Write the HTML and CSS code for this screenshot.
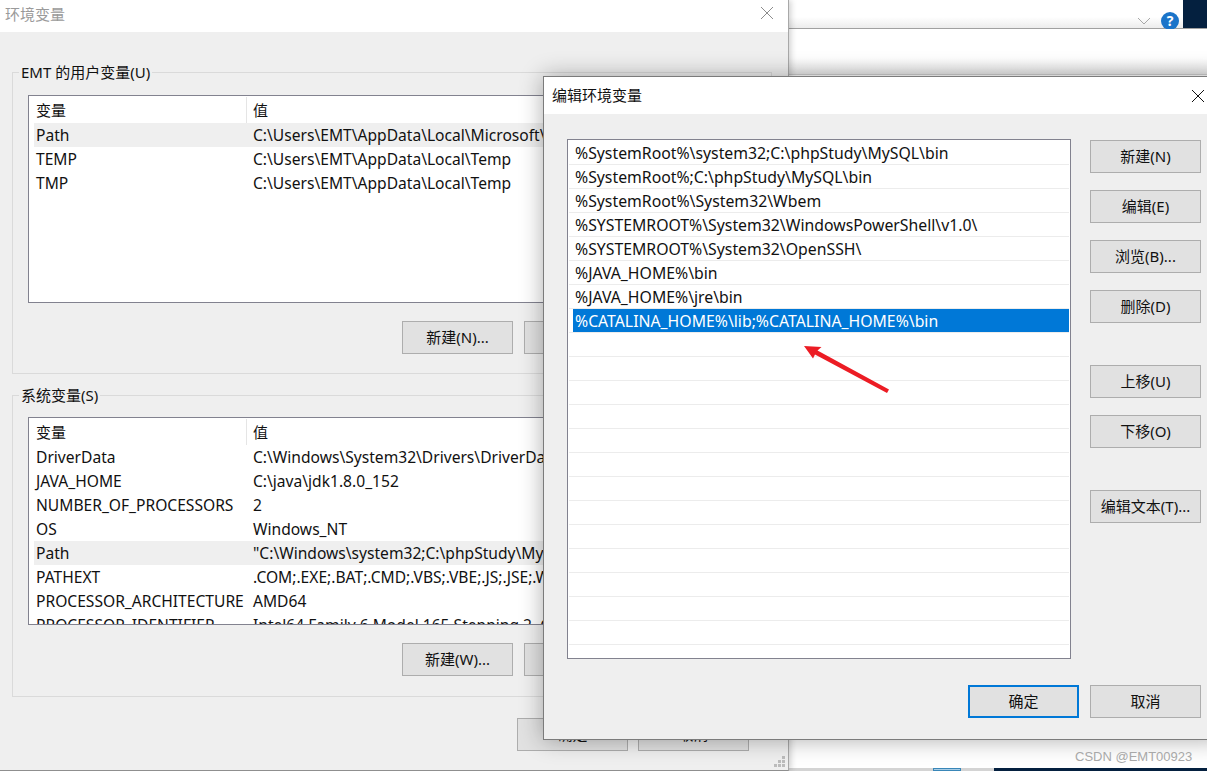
FILE: index.html
```html
<!DOCTYPE html>
<html lang="zh-CN">
<head>
    <meta charset="UTF-8">
    <title>编辑环境变量</title>
    <link rel="stylesheet" href="styles.css">
</head>
<body>
    <div class="desktop">
        <!-- window behind the dialogs -->
        <div class="bg-toolbar">
            <svg class="bg-chevron" width="14" height="8" viewBox="0 0 14 8"><path d="M1 1l6 6 6-6" fill="none" stroke="#a8a8a8" stroke-width="1"/></svg>
            <div class="bg-help">?</div>
            <div class="bg-navy"></div>
        </div>
        <div class="bg-pane"></div>
        <div class="bg-bottom"></div>
        <div class="taskbar">
            <div class="task-light"></div>
            <div class="task-item"></div>
            <div class="task-light2"></div>
            <div class="task-navy"></div>
        </div>

        <!-- 环境变量 -->
        <div class="win win-back">
            <div class="win-title back-title">
                <span>环境变量</span>
                <svg width="14" height="14" viewBox="0 0 14 14"><path d="M1 1l12 12M13 1L1 13" stroke="#8c8c8c" stroke-width="1" fill="none"/></svg>
            </div>
            <div class="back-body">
                <div class="group">
                    <div class="group-label">EMT 的用户变量(U)</div>
                    <div class="var-list">
                        <div class="var-head"><div class="head-name">变量</div><div class="head-val">值</div></div>
                        <div class="var-row hl"><span>Path</span><span>C:\Users\EMT\AppData\Local\Microsoft\WindowsApps</span></div>
                        <div class="var-row"><span>TEMP</span><span>C:\Users\EMT\AppData\Local\Temp</span></div>
                        <div class="var-row"><span>TMP</span><span>C:\Users\EMT\AppData\Local\Temp</span></div>
                    </div>
                    <div class="btn-row">
                        <button class="btn">新建(N)...</button>
                        <button class="btn">编辑(I)...</button>
                        <button class="btn">删除(L)</button>
                    </div>
                </div>
                <div class="group group-sys">
                    <div class="group-label">系统变量(S)</div>
                    <div class="var-list">
                        <div class="var-head"><div class="head-name">变量</div><div class="head-val">值</div></div>
                        <div class="var-row"><span>DriverData</span><span>C:\Windows\System32\Drivers\DriverData</span></div>
                        <div class="var-row"><span>JAVA_HOME</span><span>C:\java\jdk1.8.0_152</span></div>
                        <div class="var-row"><span>NUMBER_OF_PROCESSORS</span><span>2</span></div>
                        <div class="var-row"><span>OS</span><span>Windows_NT</span></div>
                        <div class="var-row hl"><span>Path</span><span>"C:\Windows\system32;C:\phpStudy\MySQL\bin;C:\Windows</span></div>
                        <div class="var-row"><span>PATHEXT</span><span>.COM;.EXE;.BAT;.CMD;.VBS;.VBE;.JS;.JSE;.WSF;.WSH;.MSC</span></div>
                        <div class="var-row"><span>PROCESSOR_ARCHITECTURE</span><span>AMD64</span></div>
                        <div class="var-row"><span>PROCESSOR_IDENTIFIER</span><span>Intel64 Family 6 Model 165 Stepping 2, GenuineIntel</span></div>
                    </div>
                    <div class="btn-row">
                        <button class="btn">新建(W)...</button>
                        <button class="btn">编辑(I)...</button>
                        <button class="btn">删除(L)</button>
                    </div>
                </div>
                <div class="btn-row back-actions">
                    <button class="btn">确定</button>
                    <button class="btn">取消</button>
                </div>
            </div>
            <svg class="grip" width="12" height="12" viewBox="0 0 12 12" fill="#bcbcbc">
                <rect x="8" y="0" width="3" height="3"/>
                <rect x="4" y="4" width="3" height="3"/><rect x="8" y="4" width="3" height="3"/>
                <rect x="0" y="8" width="3" height="3"/><rect x="4" y="8" width="3" height="3"/><rect x="8" y="8" width="3" height="3"/>
            </svg>
        </div>

        <!-- 编辑环境变量 -->
        <div class="win win-edit">
            <div class="win-title edit-title">
                <span>编辑环境变量</span>
                <svg width="14" height="14" viewBox="0 0 14 14"><path d="M1 1l12 12M13 1L1 13" stroke="#111" stroke-width="1" fill="none"/></svg>
            </div>
            <div class="edit-body">
                <div class="edit-main">
                    <div class="path-list">
                        <div class="path-row"><span>%SystemRoot%\system32;C:\phpStudy\MySQL\bin</span></div>
                        <div class="path-row"><span>%SystemRoot%;C:\phpStudy\MySQL\bin</span></div>
                        <div class="path-row"><span>%SystemRoot%\System32\Wbem</span></div>
                        <div class="path-row"><span>%SYSTEMROOT%\System32\WindowsPowerShell\v1.0\</span></div>
                        <div class="path-row"><span>%SYSTEMROOT%\System32\OpenSSH\</span></div>
                        <div class="path-row"><span>%JAVA_HOME%\bin</span></div>
                        <div class="path-row"><span>%JAVA_HOME%\jre\bin</span></div>
                        <div class="path-row selected"><span>%CATALINA_HOME%\lib;%CATALINA_HOME%\bin</span></div>
                        <div class="path-row"></div><div class="path-row"></div><div class="path-row"></div>
                        <div class="path-row"></div><div class="path-row"></div><div class="path-row"></div>
                        <div class="path-row"></div><div class="path-row"></div><div class="path-row"></div>
                        <div class="path-row"></div><div class="path-row"></div><div class="path-row"></div>
                        <div class="path-row"></div><div class="path-row last"></div>
                    </div>
                    <div class="side-btns">
                        <button class="btn">新建(N)</button>
                        <button class="btn">编辑(E)</button>
                        <button class="btn">浏览(B)...</button>
                        <button class="btn">删除(D)</button>
                        <button class="btn gap-before">上移(U)</button>
                        <button class="btn">下移(O)</button>
                        <button class="btn gap-before">编辑文本(T)...</button>
                    </div>
                </div>
                <div class="edit-actions">
                    <button class="btn btn-default">确定</button>
                    <button class="btn">取消</button>
                </div>
            </div>
        </div>

        <!-- annotation drawn on top of the screenshot -->
        <svg class="arrow" width="100" height="60" viewBox="0 0 100 60">
            <path d="M4 6L21.500 7 17.500 10.500 89 49.500 87 53 15 14.500 13 18.500Z" fill="#ec1c24"/>
        </svg>
        <div class="watermark">CSDN @EMT00923</div>
    </div>
</body>
</html>
```

FILE: styles.css
```css
* {
    margin: 0;
    padding: 0;
    box-sizing: border-box;
}

body {
    font-family: "Noto Sans", "Noto Sans CJK SC", sans-serif;
    font-size: 15px;
    color: #111;
    background: #fff;
    overflow: hidden;
}

.desktop {
    position: relative;
    width: 1207px;
    height: 771px;
    overflow: hidden;
    background: #fff;
}

/* stuff behind the dialogs */
.bg-toolbar {
    position: absolute;
    left: 788px;
    top: 0;
    width: 419px;
    height: 29px;
    background: linear-gradient(#fff 60%, #ececec);
    border-bottom: 1px solid #a0a0a0;
}

.bg-chevron {
    position: absolute;
    left: 349px;
    top: 17px;
}

.bg-help {
    position: absolute;
    left: 373px;
    top: 12px;
    width: 18px;
    height: 18px;
    border-radius: 50%;
    background: #1b74c9;
    color: #fff;
    font-weight: 700;
    font-size: 14px;
    line-height: 18px;
    text-align: center;
}

.bg-navy {
    position: absolute;
    left: 395px;
    top: 0;
    width: 24px;
    height: 28px;
    background: #04203f;
}

.bg-pane {
    position: absolute;
    left: 788px;
    top: 29px;
    width: 419px;
    height: 46px;
    background: linear-gradient(#fff 65%, #e8e8e8);
    border-bottom: 1px solid #d0d0d0;
}

.bg-bottom {
    position: absolute;
    left: 788px;
    top: 740px;
    width: 419px;
    height: 28px;
    background: #fff;
}

.taskbar {
    position: absolute;
    left: 0;
    top: 768px;
    width: 1207px;
    height: 3px;
    display: flex;
    padding-left: 788px;
}

.task-light { width: 145px; background: #d4d4d4; }
.task-item { width: 28px; background: #a8cde6; border: 1px solid #3a87b8; }
.task-light2 { width: 33px; background: #d4d4d4; }
.task-navy { flex: 1; background: #04203f; }

/* windows */
.win {
    position: absolute;
    background: #efefef;
    display: flex;
    flex-direction: column;
}

.win-title {
    background: #fff;
    display: flex;
    align-items: center;
    justify-content: space-between;
    flex-shrink: 0;
    white-space: nowrap;
}

.win-back {
    left: 0;
    top: 0;
    width: 789px;
    height: 771px;
    border-right: 1px solid #a8a8a8;
    border-bottom: 1px solid #8f8f8f;
    box-shadow: 2px 0 6px rgba(0, 0, 0, 0.18);
}

.back-title {
    height: 32px;
    padding: 0 14px 6px 5px;
    color: #9a9a9a;
}

.back-body {
    padding: 40px 16px 0 12px;
}

.group {
    position: relative;
    height: 302px;
    border: 1px solid #dadada;
    padding: 22px 14px 0 15px;
}

.group-sys {
    margin-top: 21px;
    padding-top: 21px;
}

.group-label {
    position: absolute;
    left: 6px;
    top: -11px;
    padding: 0 2px;
    background: #efefef;
    line-height: 20px;
}

.var-list {
    height: 208px;
    background: #fff;
    border: 1px solid #82828f;
    overflow: hidden;
    font-size: 15.6px;
}

.var-head {
    height: 27px;
    display: flex;
    align-items: center;
    font-size: 15px;
}

.head-name {
    width: 218px;
    height: 26px;
    padding-left: 7px;
    line-height: 27px;
    border-right: 1px solid #e5e5e5;
}

.head-val {
    padding-left: 6px;
}

.var-row {
    height: 24px;
    line-height: 24px;
    margin-left: 5px;
    padding-left: 2px;
    display: grid;
    grid-template-columns: 217px 1fr;
    white-space: nowrap;
    overflow: hidden;
}

.var-row.hl {
    background: #efefef;
}

.btn {
    width: 111px;
    height: 33px;
    padding-bottom: 2px;
    flex-shrink: 0;
    background: #e1e1e1;
    border: 1px solid #adadad;
    font: inherit;
    color: #111;
    white-space: nowrap;
}

.btn-row {
    display: flex;
    justify-content: flex-end;
    gap: 11px;
    margin-top: 18px;
}

.back-actions {
    gap: 10px;
    margin: 21px 23px 0 0;
}

.grip {
    position: absolute;
    right: 2px;
    bottom: 2px;
}

.win-edit {
    left: 543px;
    top: 76px;
    width: 680px;
    height: 664px;
    border: 1px solid #7b7b7b;
    box-shadow: 0 0 22px rgba(0, 0, 0, 0.32);
}

.edit-title {
    height: 37px;
    padding: 0 17px 2px 8px;
}

.edit-title svg {
    margin-top: 2px;
}

.edit-body {
    padding: 25px 0 0 23px;
}

.edit-main {
    display: flex;
    gap: 19px;
}

.path-list {
    width: 504px;
    height: 520px;
    background: #fff;
    border: 1px solid #82828f;
    padding: 1px 1px 0;
    overflow: hidden;
    font-size: 15.8px;
}

.path-row {
    height: 24px;
    padding-left: 4px;
    border-bottom: 1px solid #ececec;
    display: flex;
}

.path-row span {
    flex: 1;
    padding-left: 2px;
    line-height: 24px;
    white-space: nowrap;
}

.path-row.selected span {
    background: #0078d7;
    color: #fff;
}

.path-row.last {
    border-bottom: 0;
}

.side-btns {
    display: flex;
    flex-direction: column;
    gap: 17px;
    margin-top: 1px;
}

.side-btns .gap-before {
    margin-top: 25px;
}

.edit-actions {
    display: flex;
    gap: 11px;
    margin: 26px 0 0 401px;
}

.btn-default {
    border: 2px solid #0078d7;
}

.arrow {
    position: absolute;
    left: 800px;
    top: 340px;
}

.watermark {
    position: absolute;
    left: 1075px;
    top: 749px;
    font-family: "Liberation Sans", sans-serif;
    font-size: 13px;
    line-height: 16px;
    color: #a8a8a8;
}
```
